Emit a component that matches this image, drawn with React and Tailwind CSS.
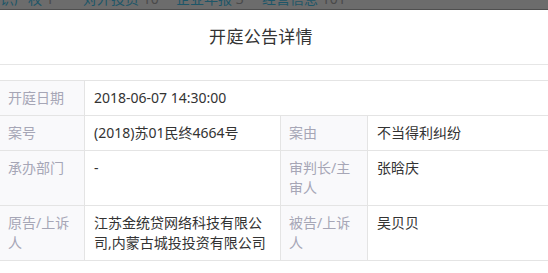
export default function App() {
  const font = { fontFamily: '"Noto Sans", "Noto Sans CJK SC", sans-serif' }
  const label = 'bg-[#f9f9fb] text-[#a6a6b6] align-top border border-[#e4e4e4] py-[7px] pl-[8px] pr-[10px]'
  const value = 'text-[#333333] align-top border border-[#e4e4e4] py-[7px] pl-[9px] pr-[8px]'

  return (
    <div className="w-[548px] h-[273px] overflow-hidden bg-white" style={font}>
      <div className="h-[10px] overflow-hidden bg-[#6c6c6c] border-b border-[#4f4f4f]">
        <div className="-mt-[11px] flex whitespace-nowrap text-[14px] leading-[20px]">
          <span className="-ml-[14px] w-[97px] text-[#1d5668]">知识产权 <span className="text-[#4a4a4a]">1</span></span>
          <span className="w-[93px] text-[#1d5668]">对外投资 <span className="text-[#4a4a4a]">10</span></span>
          <span className="w-[86px] text-[#1d5668]">企业年报 <span className="text-[#4a4a4a]">3</span></span>
          <span className="text-[#1d5668]">经营信息 <span className="text-[#4a4a4a]">101</span></span>
        </div>
      </div>

      <div className="h-[55px] flex items-center justify-center border-b border-[#e6e6e6] pr-[26px]">
        <h2 className="text-[17px] text-[#333333] tracking-[0.3px]">开庭公告详情</h2>
      </div>

      <div className="pt-[15px]">
        <table className="w-[600px] border-collapse table-fixed text-[14px] leading-[20px] -ml-[1px]">
          <colgroup>
            <col className="w-[85px]" />
            <col className="w-[196px]" />
            <col className="w-[87px]" />
            <col />
          </colgroup>
          <tbody>
            <tr>
              <td className={label}>开庭日期</td>
              <td className={value} colSpan={3}>2018-06-07 14:30:00</td>
            </tr>
            <tr>
              <td className={label}>案号</td>
              <td className={value}>(2018)苏01民终4664号</td>
              <td className={label}>案由</td>
              <td className={value}>不当得利纠纷</td>
            </tr>
            <tr>
              <td className={label}>承办部门</td>
              <td className={value}>-</td>
              <td className={label}>审判长/主审人</td>
              <td className={value}>张晗庆</td>
            </tr>
            <tr>
              <td className={label}>原告/上诉人</td>
              <td className={value}>江苏金统贷网络科技有限公司,内蒙古城投投资有限公司</td>
              <td className={label}>被告/上诉人</td>
              <td className={value}>吴贝贝</td>
            </tr>
          </tbody>
        </table>
      </div>
    </div>
  )
}
